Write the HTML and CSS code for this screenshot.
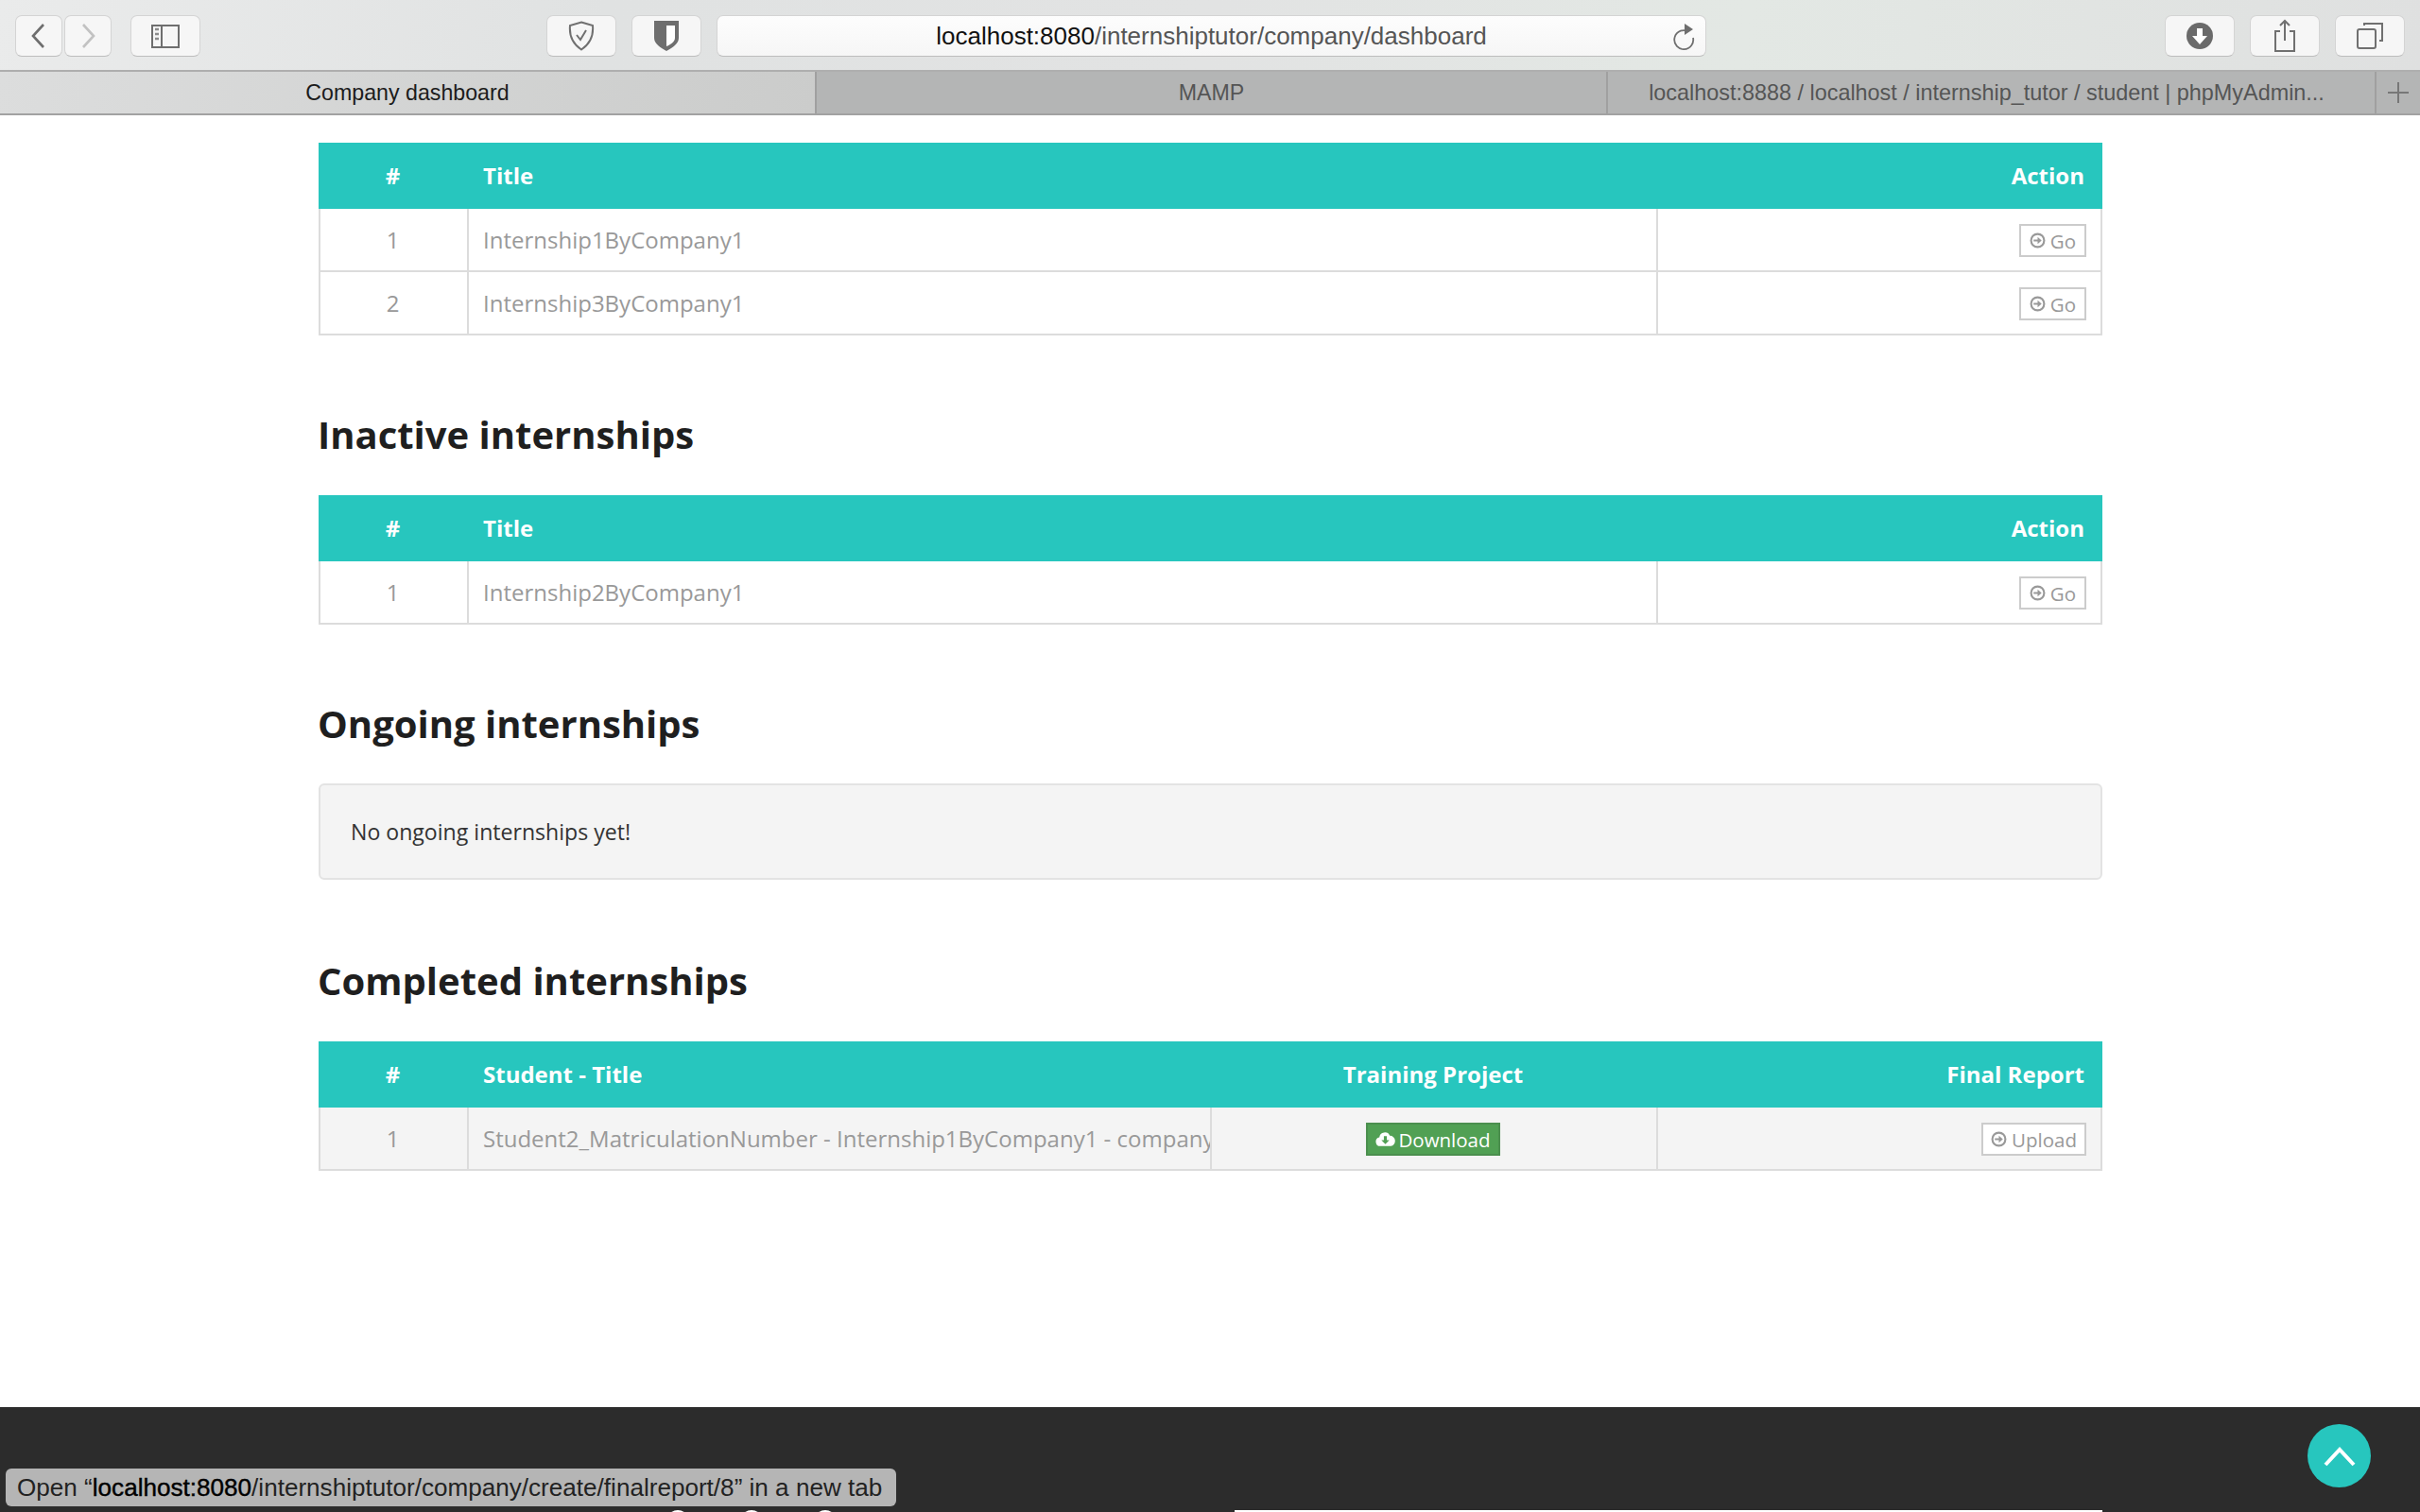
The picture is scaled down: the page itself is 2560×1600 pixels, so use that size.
FILE: index.html
```html
<!DOCTYPE html>
<html lang="en">
<head>
<meta charset="utf-8">
<title>Company dashboard</title>
<link rel="stylesheet" href="styles.css">
</head>
<body>
<header class="chrome">
  <div class="toolbar">
    <div class="tb-group nav">
      <button class="tb-btn nav-btn"><svg width="22" height="30" viewBox="0 0 22 30"><path d="M16 3 5 15l11 12" fill="none" stroke="#6e6e6e" stroke-width="2.6"/></svg></button>
      <button class="tb-btn nav-btn"><svg width="22" height="30" viewBox="0 0 22 30"><path d="M6 3l11 12L6 27" fill="none" stroke="#c2c2c2" stroke-width="2.6"/></svg></button>
    </div>
    <button class="tb-btn sidebar"><svg width="30" height="25" viewBox="0 0 30 25"><rect x="1" y="1" width="28" height="23" fill="none" stroke="#6e6e6e" stroke-width="2"/><path d="M11 1v23" stroke="#6e6e6e" stroke-width="2"/><path d="M4 5h4M4 10h4M4 15h4" stroke="#8c8c8c" stroke-width="2.4"/></svg></button>
    <button class="tb-btn shield1"><svg width="28" height="32" viewBox="0 0 28 32"><path d="M14 1.5 26 5c1 11-2 19-12 25.500C4 24 1 16 2 5z" fill="none" stroke="#707070" stroke-width="2"/><path d="M9 15l4 5 6-10" fill="none" stroke="#707070" stroke-width="2"/></svg></button>
    <button class="tb-btn shield2"><svg width="28" height="34" viewBox="0 0 28 34"><path d="M1 1h26v18c0 6-6 10-13 14C7 29 1 25 1 19z" fill="#6e6e6e"/><path d="M14 6h9v13c0 4-4 7-9 9z" fill="#fff"/></svg></button>
    <div class="address">
      <span class="url"><span class="host">localhost:8080</span>/internshiptutor/company/dashboard</span>
      <svg class="reload" width="24" height="32" viewBox="0 0 24 32"><path d="M14 6.500A10 10 0 1 0 21 14" fill="none" stroke="#707070" stroke-width="1.800" transform="translate(0 5)"/><path d="M11 1l9 6-9 6z" fill="#6e6e6e" transform="translate(1 3)"/></svg>
    </div>
    <button class="tb-btn download"><svg width="30" height="30" viewBox="0 0 30 30"><circle cx="15" cy="15" r="14" fill="#6a6a6a"/><path d="M12 7h6v8h5l-8 9-8-9h5z" fill="#fff"/></svg></button>
    <button class="tb-btn share"><svg width="24" height="36" viewBox="0 0 24 36"><path d="M7 13H2v21h20V13h-5" fill="none" stroke="#707070" stroke-width="2"/><path d="M12 2v21M7 7l5-5 5 5" fill="none" stroke="#707070" stroke-width="2"/></svg></button>
    <button class="tb-btn tabs-btn"><svg width="28" height="28" viewBox="0 0 28 28"><rect x="1" y="7" width="19" height="20" rx="2" fill="none" stroke="#707070" stroke-width="2"/><path d="M8 3V1h19v18h-3" fill="none" stroke="#707070" stroke-width="2"/></svg></button>
  </div>
  <nav class="tabbar">
    <div class="tab tab-active">Company dashboard</div>
    <div class="tab tab-mamp">MAMP</div>
    <div class="tab tab-pma">localhost:8888 / localhost / internship_tutor / student | phpMyAdmin...</div>
    <div class="tab tab-new"><svg width="24" height="24" viewBox="0 0 24 24"><path d="M12 1v22M1 12h22" stroke="#777" stroke-width="2"/></svg></div>
  </nav>
</header>

<main class="content">
  <table class="grid first">
    <colgroup><col class="c-num"><col class="c-title"><col></colgroup>
    <thead><tr><th class="center">#</th><th>Title</th><th class="right">Action</th></tr></thead>
    <tbody>
      <tr><td class="center">1</td><td>Internship1ByCompany1</td><td class="right"><a class="btn"><svg class="ico" viewBox="0 0 16 16"><circle cx="8" cy="8" r="6.500" fill="none" stroke="#999" stroke-width="2"/><path d="M4 7h4V4.500L12 8l-4 3.500V9H4z" fill="#999"/></svg>Go</a></td></tr>
      <tr><td class="center">2</td><td>Internship3ByCompany1</td><td class="right"><a class="btn"><svg class="ico" viewBox="0 0 16 16"><circle cx="8" cy="8" r="6.500" fill="none" stroke="#999" stroke-width="2"/><path d="M4 7h4V4.500L12 8l-4 3.500V9H4z" fill="#999"/></svg>Go</a></td></tr>
    </tbody>
  </table>

  <h2 class="heading">Inactive internships</h2>
  <table class="grid">
    <colgroup><col class="c-num"><col class="c-title"><col></colgroup>
    <thead><tr><th class="center">#</th><th>Title</th><th class="right">Action</th></tr></thead>
    <tbody>
      <tr><td class="center">1</td><td>Internship2ByCompany1</td><td class="right"><a class="btn"><svg class="ico" viewBox="0 0 16 16"><circle cx="8" cy="8" r="6.500" fill="none" stroke="#999" stroke-width="2"/><path d="M4 7h4V4.500L12 8l-4 3.500V9H4z" fill="#999"/></svg>Go</a></td></tr>
    </tbody>
  </table>

  <h2 class="heading">Ongoing internships</h2>
  <div class="well">No ongoing internships yet!</div>

  <h2 class="heading">Completed internships</h2>
  <table class="grid striped">
    <colgroup><col class="c-num"><col class="c-student"><col class="c-project"><col></colgroup>
    <thead><tr><th class="center">#</th><th>Student - Title</th><th class="center">Training Project</th><th class="right">Final Report</th></tr></thead>
    <tbody>
      <tr><td class="center">1</td><td class="clip">Student2_MatriculationNumber - Internship1ByCompany1 - company1</td><td class="center"><a class="btn btn-green"><svg class="ico" viewBox="0 0 20 16"><path d="M5 15a4.500 4.500 0 0 1-1-8.900A5.500 5.500 0 0 1 14.500 4.500 5.300 5.300 0 0 1 15.500 15z" fill="#fff"/><path d="M8.500 5h3v4H14l-4 4-4-4h2.500z" fill="#51a054"/></svg>Download</a></td><td class="right"><a class="btn btn-white"><svg class="ico" viewBox="0 0 16 16"><circle cx="8" cy="8" r="6.500" fill="none" stroke="#999" stroke-width="2"/><path d="M4 7h4V4.500L12 8l-4 3.500V9H4z" fill="#999"/></svg>Upload</a></td></tr>
    </tbody>
  </table>
</main>

<footer class="footer">
  <div class="foot-row">
    <span class="dot"></span><span class="dot"></span><span class="dot"></span>
    <span class="foot-line"></span>
  </div>
</footer>

<a class="to-top"><svg width="36" height="24" viewBox="0 0 36 24"><path d="M3 21 18 5l15 16" fill="none" stroke="#fff" stroke-width="4"/></svg></a>
<div class="status">Open “<b>localhost:8080</b>/internshiptutor/company/create/finalreport/8” in a new tab</div>
</body>
</html>
```

FILE: styles.css
```css
* { box-sizing: border-box; }
html, body { margin: 0; padding: 0; height: 1600px; overflow: hidden; background: #fff; }
body { font-family: "Open Sans", sans-serif; color: #999; position: relative; }

.chrome { font-family: "Liberation Sans", sans-serif; }
.toolbar {
  height: 76px;
  padding: 16px 16px 14px 16px;
  display: flex;
  align-items: stretch;
  background: linear-gradient(100deg, #eaebeb 0%, #e0e2e2 25%, #e2e3e3 50%, #e3e8e4 72%, #dfe0e0 100%);
  border-bottom: 2px solid #aeaeae;
}
.tb-group { display: flex; gap: 2px; margin-right: 20px; }
.tb-btn {
  display: flex; align-items: center; justify-content: center;
  padding: 0; background: #f6f6f6;
  border: 1px solid #d4d4d4; border-bottom-color: #bdbdbd;
  border-radius: 7px;
}
.nav-btn { width: 50px; }
.sidebar { width: 74px; margin-right: 366px; }
.shield1 { width: 74px; margin-right: 16px; }
.shield2 { width: 74px; margin-right: 16px; }
.address {
  width: 1047px; margin-right: 485px;
  display: flex; align-items: center; justify-content: center;
  position: relative;
  background: linear-gradient(#fdfdfd, #f6f6f6);
  border: 1px solid #d4d4d4; border-bottom-color: #bdbdbd;
  border-radius: 7px;
}
.url { font-size: 26px; color: #555; }
.host { color: #111; }
.reload { position: absolute; right: 10px; top: 4px; }
.download { width: 74px; margin-right: 16px; }
.share { width: 74px; margin-right: 16px; }
.tabs-btn { width: 74px; }

.tabbar {
  display: flex; height: 46px;
  background: #b4b5b5;
  border-bottom: 2px solid #a2a2a2;
}
.tab {
  display: flex; align-items: center; justify-content: center;
  font-size: 23.200px; color: #555;
  border-right: 2px solid #a0a0a0;
  white-space: nowrap;
}
.tab-active { width: 864px; background: linear-gradient(100deg, #dcdddd, #cbcccb); color: #1c1c1c; }
.tab-mamp { width: 837px; }
.tab-pma { width: 813px; padding-right: 10px; font-size: 23.400px; }
.tab-new { width: 46px; border-right: 0; }

.content { width: 1887px; margin-left: 337px; padding-top: 29px; }
.grid { width: 100%; border-collapse: collapse; table-layout: fixed; font-size: 24px; }
.c-num { width: 157px; }
.c-title { width: 1258px; }
.c-student { width: 786px; }
.c-project { width: 472px; }
.grid th {
  height: 68px; padding: 0 15px 2px;
  background: #27c6be; color: #fff;
  font-size: 24px; font-weight: 700; text-align: left;
  border: 2px solid #27c6be;
}
.grid td {
  height: 67px; padding: 0 15px;
  border: 2px solid #dcdcdc;
  font-weight: 400; color: #999;
  white-space: nowrap;
}
.grid .center { text-align: center; padding-right: 17px; }
.grid .right { text-align: right; }
.grid th.right { padding-right: 17px; }
.grid .clip { overflow: hidden; padding-right: 0; }
.striped td { background: #f4f4f4; }

.btn {
  display: inline-flex; align-items: center;
  height: 35px; padding: 0 9px;
  font-size: 20.500px; color: #999;
  border: 2px solid #ccc; background: #fff;
  vertical-align: middle;
}
.ico { width: 17px; height: 17px; margin-right: 5px; }
.btn-green { background: #51a054; border-color: #4b8f4e; color: #fff; padding: 0 8px; }
.btn-green .ico { width: 21px; margin-right: 3px; }
.btn-white { padding: 0 8px; }

.heading {
  margin: 0 0 0 -1px; padding: 65px 0 24px;
  font-size: 40px; line-height: 80px; height: 169px;
  font-weight: 700; color: #1f1f1f;
}
.well {
  height: 102px; padding: 0 32px; margin: -1px 0 2px;
  display: flex; align-items: center;
  font-size: 23.100px; color: #333;
  background: #f4f4f4;
  border: 2px solid #e3e3e3; border-radius: 6px;
}

.footer { position: absolute; left: 0; right: 0; top: 1489px; height: 111px; background: #2c2c2c; overflow: hidden; }
.foot-row { display: flex; padding: 109px 336px 0 705px; }
.dot { width: 24px; height: 24px; border-radius: 50%; background: #fff; margin-right: 54px; flex: none; }
.foot-line { flex: 1; height: 2px; margin-left: 367px; background: #fff; }

.to-top {
  position: absolute; left: 2441px; top: 1507px;
  width: 67px; height: 67px; border-radius: 50%;
  background: #27c6be;
  display: flex; align-items: center; justify-content: center;
}
.status {
  position: absolute; left: 6px; top: 1554px;
  width: 942px; height: 40px;
  padding-left: 12px;
  display: flex; align-items: center; white-space: pre;
  font-family: "Liberation Sans", sans-serif; font-size: 26.100px; color: #222;
  background: #b5b5b5; border-radius: 6px;
}
.status b { font-weight: 400; color: #000; -webkit-text-stroke: .4px #000; }
```
